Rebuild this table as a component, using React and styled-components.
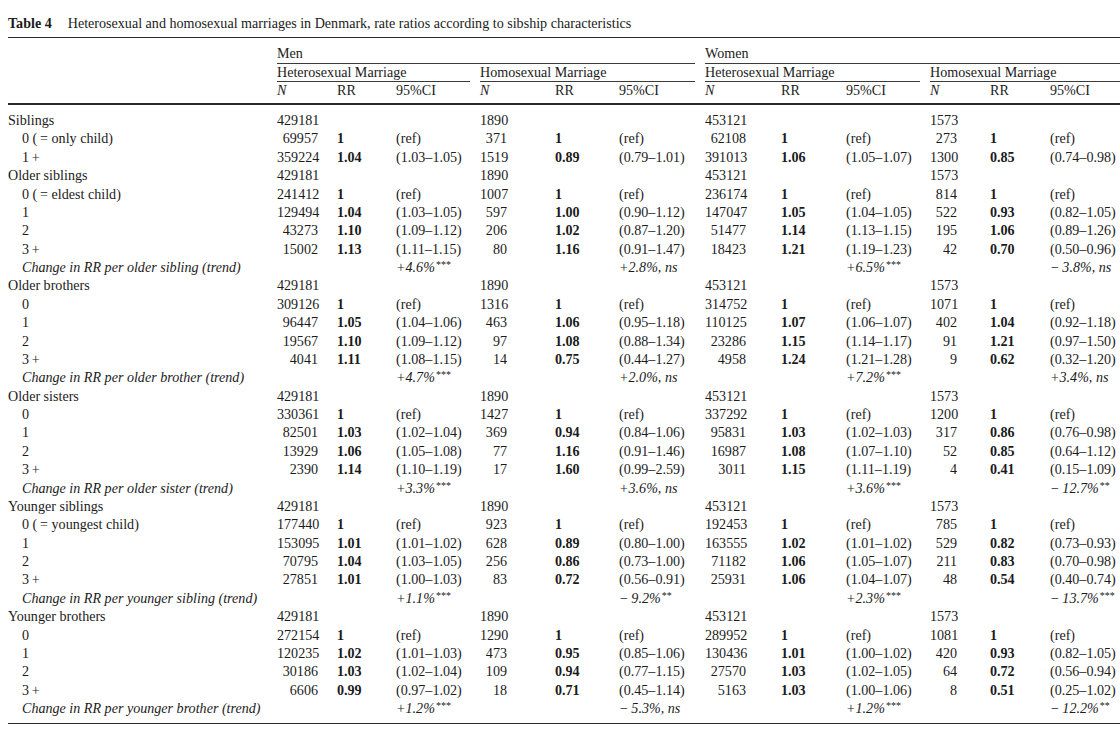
import React from 'react';
import styled, { createGlobalStyle } from 'styled-components';

const GlobalStyle = createGlobalStyle`
  html, body {
    margin: 0;
    padding: 0;
    background: #fff;
    overflow: hidden;
  }
  body {
    font-family: "Liberation Serif", "Times New Roman", serif;
    font-size: 14.1px;
    color: #1b1b1b;
  }
`;

const COLS = '269px 60px 59px 84px 75px 64px 86px 76px 65px 84px 60px 60px 90px';
// right padding of the N column in each group, so the numbers line up like the print
const N_PAD = [19, 48, 35, 33];

const Page = styled.div`
  width: 1132px;
  padding: 14px 0 0 8px;
`;

const Caption = styled.div`
  display: flex;
  gap: 16px;
  line-height: 18px;
  white-space: nowrap;
`;

const CaptionLabel = styled.span`
  font-weight: bold;
`;

const Table = styled.div`
  margin-top: 5px;
  border-top: 1px solid #2a2a2a;
  border-bottom: 1px solid #2a2a2a;
`;

const Head = styled.div`
  display: grid;
  grid-template-columns: ${COLS};
  padding-top: 7px;
  border-bottom: 2px solid #2a2a2a;
`;

const GroupHead = styled.div`
  grid-column: ${(p) => p.$col} / span ${(p) => p.$span};
  margin-right: ${(p) => (p.$last ? 0 : 10)}px;
  line-height: 16px;
  padding-bottom: ${(p) => p.$pad}px;
  border-bottom: 1px solid #3a3a3a;
  white-space: nowrap;
`;

const ColHead = styled.div`
  line-height: 16px;
  padding-bottom: 5px;
  font-style: ${(p) => (p.$italic ? 'italic' : 'normal')};
  white-space: nowrap;
`;

const Body = styled.div`
  padding: 6px 0 6px;
`;

const Row = styled.div`
  display: grid;
  grid-template-columns: ${COLS};
  height: 18.375px;
  line-height: 18.375px;
  white-space: nowrap;
`;

const Label = styled.div`
  padding-left: ${(p) => (p.$sub ? 14 : 0)}px;
  font-style: ${(p) => (p.$italic ? 'italic' : 'normal')};
`;

const NCell = styled.div`
  text-align: right;
  padding-right: ${(p) => p.$pad}px;
`;

const RRCell = styled.div`
  font-weight: bold;
`;

const CICell = styled.div`
  font-style: ${(p) => (p.$italic ? 'italic' : 'normal')};
`;

const Stars = styled.sup`
  font-size: 10px;
  line-height: 0;
  vertical-align: 4px;
  font-style: normal;
  margin-left: 1px;
`;

const M = '\u2212\u2009';

const sections = [
  {
    title: 'Siblings',
    totals: ['429181', '1890', '453121', '1573'],
    rows: [
      ['0 (\u2009= only child)', ['69957', '1', '(ref)'], ['371', '1', '(ref)'], ['62108', '1', '(ref)'], ['273', '1', '(ref)']],
      ['1\u2009+', ['359224', '1.04', '(1.03–1.05)'], ['1519', '0.89', '(0.79–1.01)'], ['391013', '1.06', '(1.05–1.07)'], ['1300', '0.85', '(0.74–0.98)']],
    ],
  },
  {
    title: 'Older siblings',
    totals: ['429181', '1890', '453121', '1573'],
    rows: [
      ['0 (\u2009= eldest child)', ['241412', '1', '(ref)'], ['1007', '1', '(ref)'], ['236174', '1', '(ref)'], ['814', '1', '(ref)']],
      ['1', ['129494', '1.04', '(1.03–1.05)'], ['597', '1.00', '(0.90–1.12)'], ['147047', '1.05', '(1.04–1.05)'], ['522', '0.93', '(0.82–1.05)']],
      ['2', ['43273', '1.10', '(1.09–1.12)'], ['206', '1.02', '(0.87–1.20)'], ['51477', '1.14', '(1.13–1.15)'], ['195', '1.06', '(0.89–1.26)']],
      ['3\u2009+', ['15002', '1.13', '(1.11–1.15)'], ['80', '1.16', '(0.91–1.47)'], ['18423', '1.21', '(1.19–1.23)'], ['42', '0.70', '(0.50–0.96)']],
    ],
    trend: ['Change in RR per older sibling (trend)', ['+4.6%', '***'], ['+2.8%, ns'], ['+6.5%', '***'], [M + '3.8%, ns']],
  },
  {
    title: 'Older brothers',
    totals: ['429181', '1890', '453121', '1573'],
    rows: [
      ['0', ['309126', '1', '(ref)'], ['1316', '1', '(ref)'], ['314752', '1', '(ref)'], ['1071', '1', '(ref)']],
      ['1', ['96447', '1.05', '(1.04–1.06)'], ['463', '1.06', '(0.95–1.18)'], ['110125', '1.07', '(1.06–1.07)'], ['402', '1.04', '(0.92–1.18)']],
      ['2', ['19567', '1.10', '(1.09–1.12)'], ['97', '1.08', '(0.88–1.34)'], ['23286', '1.15', '(1.14–1.17)'], ['91', '1.21', '(0.97–1.50)']],
      ['3\u2009+', ['4041', '1.11', '(1.08–1.15)'], ['14', '0.75', '(0.44–1.27)'], ['4958', '1.24', '(1.21–1.28)'], ['9', '0.62', '(0.32–1.20)']],
    ],
    trend: ['Change in RR per older brother (trend)', ['+4.7%', '***'], ['+2.0%, ns'], ['+7.2%', '***'], ['+3.4%, ns']],
  },
  {
    title: 'Older sisters',
    totals: ['429181', '1890', '453121', '1573'],
    rows: [
      ['0', ['330361', '1', '(ref)'], ['1427', '1', '(ref)'], ['337292', '1', '(ref)'], ['1200', '1', '(ref)']],
      ['1', ['82501', '1.03', '(1.02–1.04)'], ['369', '0.94', '(0.84–1.06)'], ['95831', '1.03', '(1.02–1.03)'], ['317', '0.86', '(0.76–0.98)']],
      ['2', ['13929', '1.06', '(1.05–1.08)'], ['77', '1.16', '(0.91–1.46)'], ['16987', '1.08', '(1.07–1.10)'], ['52', '0.85', '(0.64–1.12)']],
      ['3\u2009+', ['2390', '1.14', '(1.10–1.19)'], ['17', '1.60', '(0.99–2.59)'], ['3011', '1.15', '(1.11–1.19)'], ['4', '0.41', '(0.15–1.09)']],
    ],
    trend: ['Change in RR per older sister (trend)', ['+3.3%', '***'], ['+3.6%, ns'], ['+3.6%', '***'], [M + '12.7%', '**']],
  },
  {
    title: 'Younger siblings',
    totals: ['429181', '1890', '453121', '1573'],
    rows: [
      ['0 (\u2009= youngest child)', ['177440', '1', '(ref)'], ['923', '1', '(ref)'], ['192453', '1', '(ref)'], ['785', '1', '(ref)']],
      ['1', ['153095', '1.01', '(1.01–1.02)'], ['628', '0.89', '(0.80–1.00)'], ['163555', '1.02', '(1.01–1.02)'], ['529', '0.82', '(0.73–0.93)']],
      ['2', ['70795', '1.04', '(1.03–1.05)'], ['256', '0.86', '(0.73–1.00)'], ['71182', '1.06', '(1.05–1.07)'], ['211', '0.83', '(0.70–0.98)']],
      ['3\u2009+', ['27851', '1.01', '(1.00–1.03)'], ['83', '0.72', '(0.56–0.91)'], ['25931', '1.06', '(1.04–1.07)'], ['48', '0.54', '(0.40–0.74)']],
    ],
    trend: ['Change in RR per younger sibling (trend)', ['+1.1%', '***'], [M + '9.2%', '**'], ['+2.3%', '***'], [M + '13.7%', '***']],
  },
  {
    title: 'Younger brothers',
    totals: ['429181', '1890', '453121', '1573'],
    rows: [
      ['0', ['272154', '1', '(ref)'], ['1290', '1', '(ref)'], ['289952', '1', '(ref)'], ['1081', '1', '(ref)']],
      ['1', ['120235', '1.02', '(1.01–1.03)'], ['473', '0.95', '(0.85–1.06)'], ['130436', '1.01', '(1.00–1.02)'], ['420', '0.93', '(0.82–1.05)']],
      ['2', ['30186', '1.03', '(1.02–1.04)'], ['109', '0.94', '(0.77–1.15)'], ['27570', '1.03', '(1.02–1.05)'], ['64', '0.72', '(0.56–0.94)']],
      ['3\u2009+', ['6606', '0.99', '(0.97–1.02)'], ['18', '0.71', '(0.45–1.14)'], ['5163', '1.03', '(1.00–1.06)'], ['8', '0.51', '(0.25–1.02)']],
    ],
    trend: ['Change in RR per younger brother (trend)', ['+1.2%', '***'], [M + '5.3%, ns'], ['+1.2%', '***'], [M + '12.2%', '**']],
  },
];

const renderTrendValue = ([text, stars]) => {
  // "ns" is set in italics together with the percentage
  return (
    <>
      {text}
      {stars && <Stars>{stars}</Stars>}
    </>
  );
};

const TotalsRow = ({ title, totals }) => (
  <Row>
    <Label>{title}</Label>
    {totals.map((n, i) => (
      <React.Fragment key={i}>
        <NCell $pad={N_PAD[i]}>{n}</NCell>
        <div />
        <div />
      </React.Fragment>
    ))}
  </Row>
);

const DataRow = ({ label, groups }) => (
  <Row>
    <Label $sub>{label}</Label>
    {groups.map(([n, rr, ci], i) => (
      <React.Fragment key={i}>
        <NCell $pad={N_PAD[i]}>{n}</NCell>
        <RRCell>{rr}</RRCell>
        <CICell>{ci}</CICell>
      </React.Fragment>
    ))}
  </Row>
);

const TrendRow = ({ trend }) => {
  const [label, ...values] = trend;
  return (
    <Row>
      <Label $sub $italic>{label}</Label>
      {values.map((v, i) => (
        <React.Fragment key={i}>
          <div />
          <div />
          <CICell $italic>{renderTrendValue(v)}</CICell>
        </React.Fragment>
      ))}
    </Row>
  );
};

const groupCols = [2, 5, 8, 11];

export default function App() {
  return (
    <>
      <GlobalStyle />
      <Page>
        <Caption>
          <CaptionLabel>Table 4</CaptionLabel>
          <span>Heterosexual and homosexual marriages in Denmark, rate ratios according to sibship characteristics</span>
        </Caption>
        <Table>
          <Head>
            <GroupHead $col={2} $span={6} $pad={2}>Men</GroupHead>
            <GroupHead $col={8} $span={6} $pad={2} $last>Women</GroupHead>
            {groupCols.map((c, i) => (
              <GroupHead key={c} $col={c} $span={3} $pad={1} $last={i === 3}>
                {i % 2 === 0 ? 'Heterosexual Marriage' : 'Homosexual Marriage'}
              </GroupHead>
            ))}
            <ColHead />
            {groupCols.map((c) => (
              <React.Fragment key={c}>
                <ColHead $italic>N</ColHead>
                <ColHead>RR</ColHead>
                <ColHead>95%CI</ColHead>
              </React.Fragment>
            ))}
          </Head>
          <Body>
            {sections.map((s) => (
              <React.Fragment key={s.title}>
                <TotalsRow title={s.title} totals={s.totals} />
                {s.rows.map(([label, ...groups]) => (
                  <DataRow key={label} label={label} groups={groups} />
                ))}
                {s.trend && <TrendRow trend={s.trend} />}
              </React.Fragment>
            ))}
          </Body>
        </Table>
      </Page>
    </>
  );
}
